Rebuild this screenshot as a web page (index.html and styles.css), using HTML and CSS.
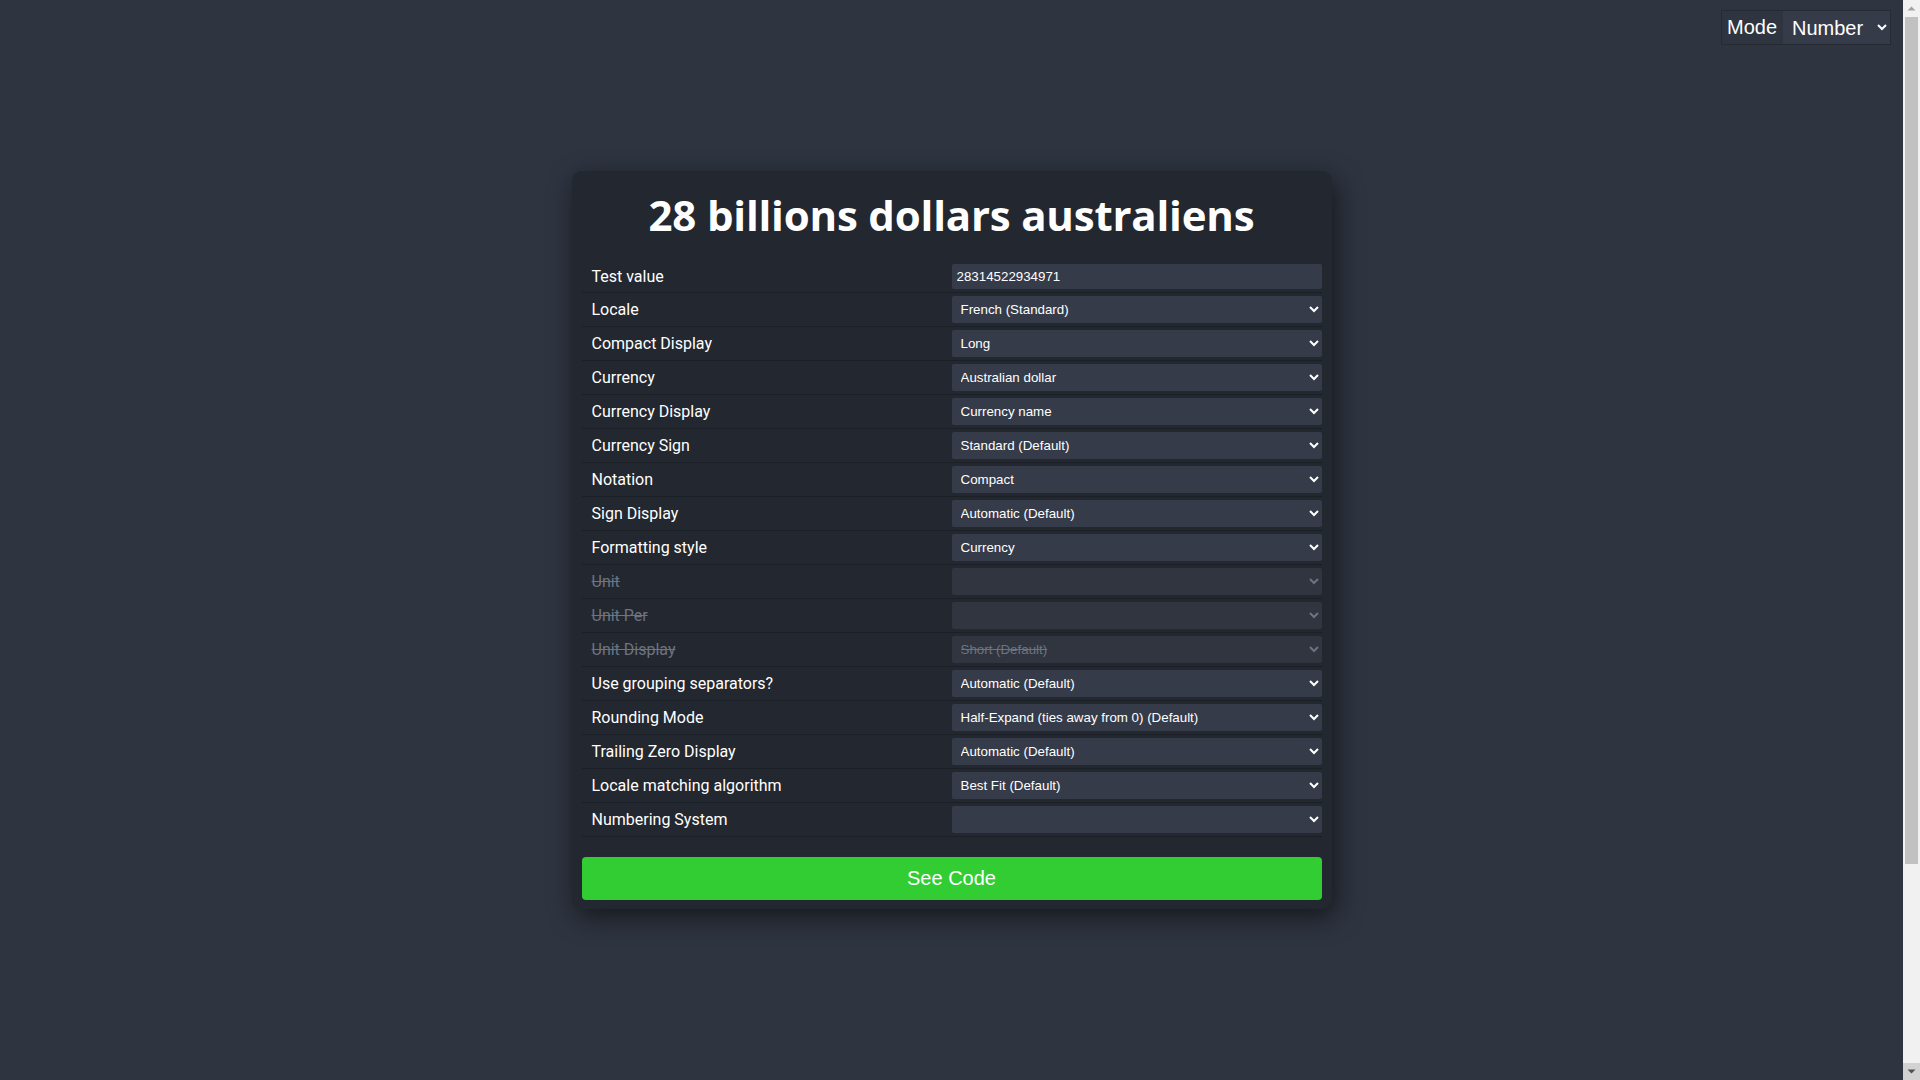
FILE: index.html
```html
<!DOCTYPE html>
<html lang="en">
<head>
<meta charset="utf-8">
<title>Intl.NumberFormat</title>
<link rel="stylesheet" href="styles.css">
</head>
<body>
<div class="mode-bar">
  <span class="mode-label">Mode</span>
  <select class="mode-select"><option>Number</option></select>
</div>
<main class="page">
  <section class="card">
    <h1 class="title">28 billions dollars australiens</h1>
    <table class="form">
      <tbody>
        <tr class="row"><td class="label">Test value</td><td class="field"><input class="input" type="text" value="28314522934971"></td></tr>
        <tr class="row"><td class="label">Locale</td><td class="field"><select class="select"><option>French (Standard)</option></select></td></tr>
        <tr class="row"><td class="label">Compact Display</td><td class="field"><select class="select"><option>Long</option></select></td></tr>
        <tr class="row"><td class="label">Currency</td><td class="field"><select class="select"><option>Australian dollar</option></select></td></tr>
        <tr class="row"><td class="label">Currency Display</td><td class="field"><select class="select"><option>Currency name</option></select></td></tr>
        <tr class="row"><td class="label">Currency Sign</td><td class="field"><select class="select"><option>Standard (Default)</option></select></td></tr>
        <tr class="row"><td class="label">Notation</td><td class="field"><select class="select"><option>Compact</option></select></td></tr>
        <tr class="row"><td class="label">Sign Display</td><td class="field"><select class="select"><option>Automatic (Default)</option></select></td></tr>
        <tr class="row"><td class="label">Formatting style</td><td class="field"><select class="select"><option>Currency</option></select></td></tr>
        <tr class="row disabled"><td class="label">Unit</td><td class="field"><select class="select" disabled><option></option></select></td></tr>
        <tr class="row disabled"><td class="label">Unit Per</td><td class="field"><select class="select" disabled><option></option></select></td></tr>
        <tr class="row disabled"><td class="label">Unit Display</td><td class="field"><select class="select" disabled><option>Short (Default)</option></select></td></tr>
        <tr class="row"><td class="label">Use grouping separators?</td><td class="field"><select class="select"><option>Automatic (Default)</option></select></td></tr>
        <tr class="row"><td class="label">Rounding Mode</td><td class="field"><select class="select"><option>Half-Expand (ties away from 0) (Default)</option></select></td></tr>
        <tr class="row"><td class="label">Trailing Zero Display</td><td class="field"><select class="select"><option>Automatic (Default)</option></select></td></tr>
        <tr class="row"><td class="label">Locale matching algorithm</td><td class="field"><select class="select"><option>Best Fit (Default)</option></select></td></tr>
        <tr class="row"><td class="label">Numbering System</td><td class="field"><select class="select"><option></option></select></td></tr>
      </tbody>
    </table>
    <button class="see-code" type="button">See Code</button>
  </section>
</main>
<div class="scrollbar" aria-hidden="true">
  <div class="sb-btn sb-up"><svg width="9" height="5" viewBox="0 0 9 5"><path d="M0.5 4.5 L4.5 0.5 L8.5 4.5 Z" fill="#a3a3a3"/></svg></div>
  <div class="sb-track"><div class="sb-thumb"></div></div>
  <div class="sb-btn sb-down"><svg width="9" height="5" viewBox="0 0 9 5"><path d="M0.5 0.5 L8.5 0.5 L4.5 4.5 Z" fill="#505050"/></svg></div>
</div>
</body>
</html>
```
FILE: styles.css
```css
html, body {
  margin: 0;
  padding: 0;
}

body {
  background: #2e3440;
  color: #ffffff;
  font-family: Roboto, "Liberation Sans", sans-serif;
}

.page {
  margin-right: 17px;
  padding: 171px 0 425px;
}

.card {
  box-sizing: border-box;
  width: 760px;
  margin: 0 auto;
  padding: 10px 10px 9px;
  background: #23272f;
  border-radius: 10px;
  box-shadow: 4px 8px 26px rgba(0, 0, 0, 0.55);
}

.title {
  margin: 5px 0 18px;
  font-family: "Open Sans", sans-serif;
  font-weight: 700;
  font-size: 42px;
  line-height: 57px;
  letter-spacing: -0.2px;
  text-align: center;
  color: #ffffff;
}

.form {
  width: 100%;
  border-collapse: collapse;
}

.row {
  border-bottom: 1px solid #1b1f26;
}

.label {
  width: 50%;
  padding: 3px 0 3px 10px;
  font-size: 16px;
  color: #ffffff;
}

.field {
  width: 50%;
  padding: 3px 0;
}

.select,
.input {
  display: block;
  box-sizing: border-box;
  width: 100%;
  margin: 0;
  border: none;
  border-radius: 2px;
  background: #363b49;
  color: #ffffff;
  font-family: "Liberation Sans", Arial, sans-serif;
  font-size: 13.333px;
  outline: none;
}

.select {
  height: 27px;
  padding: 0 0 0 5px;
}

.input {
  height: 25px;
  padding: 0 4px 0 5px;
}

.disabled .label {
  color: #6d7380;
  text-decoration: line-through;
}

.disabled .select {
  background: #30353f;
  color: #6d7380;
  text-decoration: line-through;
  opacity: 1;
}

.see-code {
  display: block;
  width: 100%;
  height: 43px;
  margin-top: 20px;
  border: none;
  border-radius: 4px;
  background: #32cd32;
  color: #ffffff;
  font-family: "Liberation Sans", Arial, sans-serif;
  font-size: 20px;
  cursor: pointer;
}

.mode-bar {
  position: fixed;
  top: 10px;
  right: 29px;
  display: flex;
  align-items: center;
  height: 35px;
  box-sizing: border-box;
  border: 1px solid #252a33;
  background: #2e3440;
}

.mode-label {
  padding: 0 6px 0 5px;
  font-family: "Liberation Sans", Arial, sans-serif;
  font-size: 20px;
  color: #ffffff;
}

.mode-select {
  height: 33px;
  width: 107px;
  margin: 0;
  border: none;
  background: #363b49;
  color: #ffffff;
  font-family: "Liberation Sans", Arial, sans-serif;
  font-size: 20px;
  padding: 0 4px 0 5px;
  outline: none;
}

.scrollbar {
  position: fixed;
  top: 0;
  right: 0;
  bottom: 0;
  width: 17px;
  display: flex;
  flex-direction: column;
  background: #f1f1f1;
}

.sb-btn {
  flex: 0 0 17px;
  display: flex;
  align-items: center;
  justify-content: center;
}

.sb-down {
  background: #d2d2d2;
}

.sb-track {
  flex: 1;
}

.sb-thumb {
  height: 847px;
  margin: 0 2px;
  background: #c1c1c1;
}
```
